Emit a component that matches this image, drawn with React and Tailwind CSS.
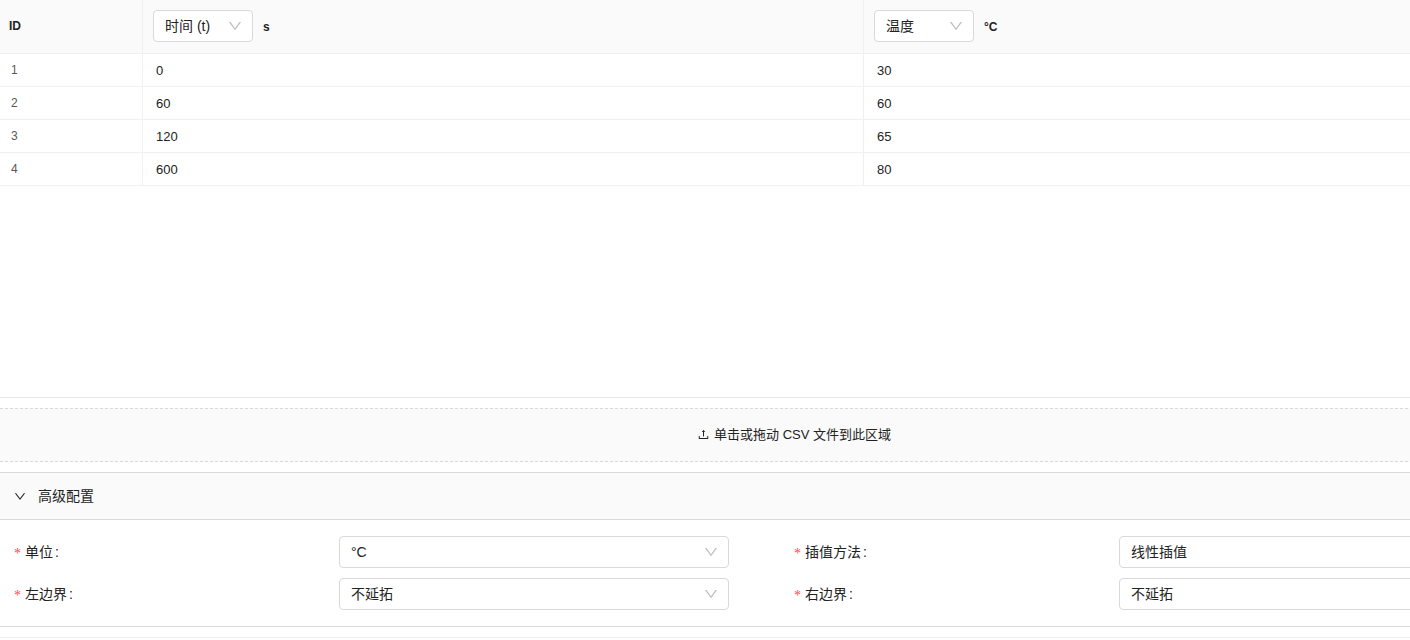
import { useState } from 'react';
import { AiOutlineDown, AiOutlineRight, AiOutlineUpload } from 'react-icons/ai';

const rows = [
  { time: 0, value: 30 },
  { time: 60, value: 60 },
  { time: 120, value: 65 },
  { time: 600, value: 80 },
];

const fields = [
  { id: 'unit', label: '单位', options: ['°C', 'K', '°F'] },
  { id: 'method', label: '插值方法', options: ['线性插值', '最近插值'] },
  { id: 'left', label: '左边界', options: ['不延拓', '常数延拓'] },
  { id: 'right', label: '右边界', options: ['不延拓', '常数延拓'] },
];

const Select = ({ options, className, ...props }) => (
  <div className={`grid items-center ${className}`}>
    <select
      className="col-start-1 row-start-1 h-8 w-full appearance-none rounded border border-[#d9d9d9] bg-white pl-[11px] pr-7 text-sm font-normal text-[#222] outline-none focus:border-[#1890ff]"
      {...props}
    >
      {options.map((option) => (
        <option key={option}>{option}</option>
      ))}
    </select>
    <AiOutlineDown className="pointer-events-none col-start-1 row-start-1 mr-2.5 size-4 justify-self-end text-[#bfbfbf]" />
  </div>
);

const HeaderCell = ({ label, options, unit }) => (
  <th className="h-[54px] border-b border-r border-[#f0f0f0] px-2.5 pb-[11px] pt-2.5 text-left align-top">
    <div className="flex items-center gap-2.5">
      <Select aria-label={label} options={options} className="w-[100px]" />
      <span className="pt-0.5 text-xs font-bold">{unit}</span>
    </div>
  </th>
);

const DataTable = () => (
  <table className="w-full table-fixed border-separate border-spacing-0 text-[13px] text-[#222]">
    <colgroup>
      <col className="w-[143px]" />
      <col />
      <col />
    </colgroup>
    <thead className="bg-[#fafafa]">
      <tr>
        <th className="border-b border-r border-[#f0f0f0] px-[9px] pb-0.5 text-left text-xs font-bold">ID</th>
        <HeaderCell label="第一列" options={['时间 (t)', '温度']} unit="s" />
        <HeaderCell label="第二列" options={['温度', '时间 (t)']} unit="°C" />
      </tr>
    </thead>
    <tbody>
      {rows.map((row, i) => (
        <tr key={row.time} className="h-[33px]">
          <td className="border-b border-r border-[#f0f0f0] px-[11px] text-xs text-[#595959]">{i + 1}</td>
          <td className="border-b border-r border-[#f0f0f0] px-[13px] pt-0.5">{row.time}</td>
          <td className="border-b border-r border-[#f0f0f0] px-[13px] pt-0.5">{row.value}</td>
        </tr>
      ))}
    </tbody>
  </table>
);

export default function App() {
  const [open, setOpen] = useState(true);

  return (
    <main className="overflow-hidden bg-white font-['Liberation_Sans','Noto_Sans_CJK_SC',sans-serif] text-sm text-[#222]">
      {/* content is wider than the viewport, the right edge is clipped */}
      <div className="w-[calc(100%+178px)] border-b border-[#f0f0f0] pb-2.5">
        <div className="min-h-[398px] border-b border-[#e8e8e8] pr-[3px]">
          <DataTable />
        </div>

        <label className="mt-2.5 flex h-[54px] cursor-pointer items-center justify-center gap-1 border-y border-dashed border-[#d9d9d9] bg-[#fafafa] text-[13px]">
          <input type="file" accept=".csv" className="hidden" />
          <AiOutlineUpload className="mb-0.5 size-[13px]" />
          单击或拖动 CSV 文件到此区域
        </label>

        <section className="mt-2.5 border-y border-[#d9d9d9]">
          <button
            type="button"
            aria-expanded={open}
            onClick={() => setOpen(!open)}
            className="flex h-[46px] w-full items-center gap-[11px] bg-[#fafafa] px-[13px] text-left"
          >
            <AiOutlineRight className={open ? 'size-3.5 rotate-90' : 'size-3.5'} />
            高级配置
          </button>
          {open && (
            <form className="grid grid-cols-2 gap-y-2.5 border-t border-[#d9d9d9] px-3.5 py-4">
              {fields.map((field) => (
                <div key={field.id} className="grid grid-cols-24 items-center">
                  <label htmlFor={field.id} className="col-span-10 flex items-center">
                    <span className="mr-1 pt-1 font-['Liberation_Serif',serif] text-[#ff4d4f]">*</span>
                    {field.label}
                    <span className="ml-0.5">:</span>
                  </label>
                  <Select id={field.id} options={field.options} className="col-span-12" />
                </div>
              ))}
            </form>
          )}
        </section>
      </div>
    </main>
  );
}
